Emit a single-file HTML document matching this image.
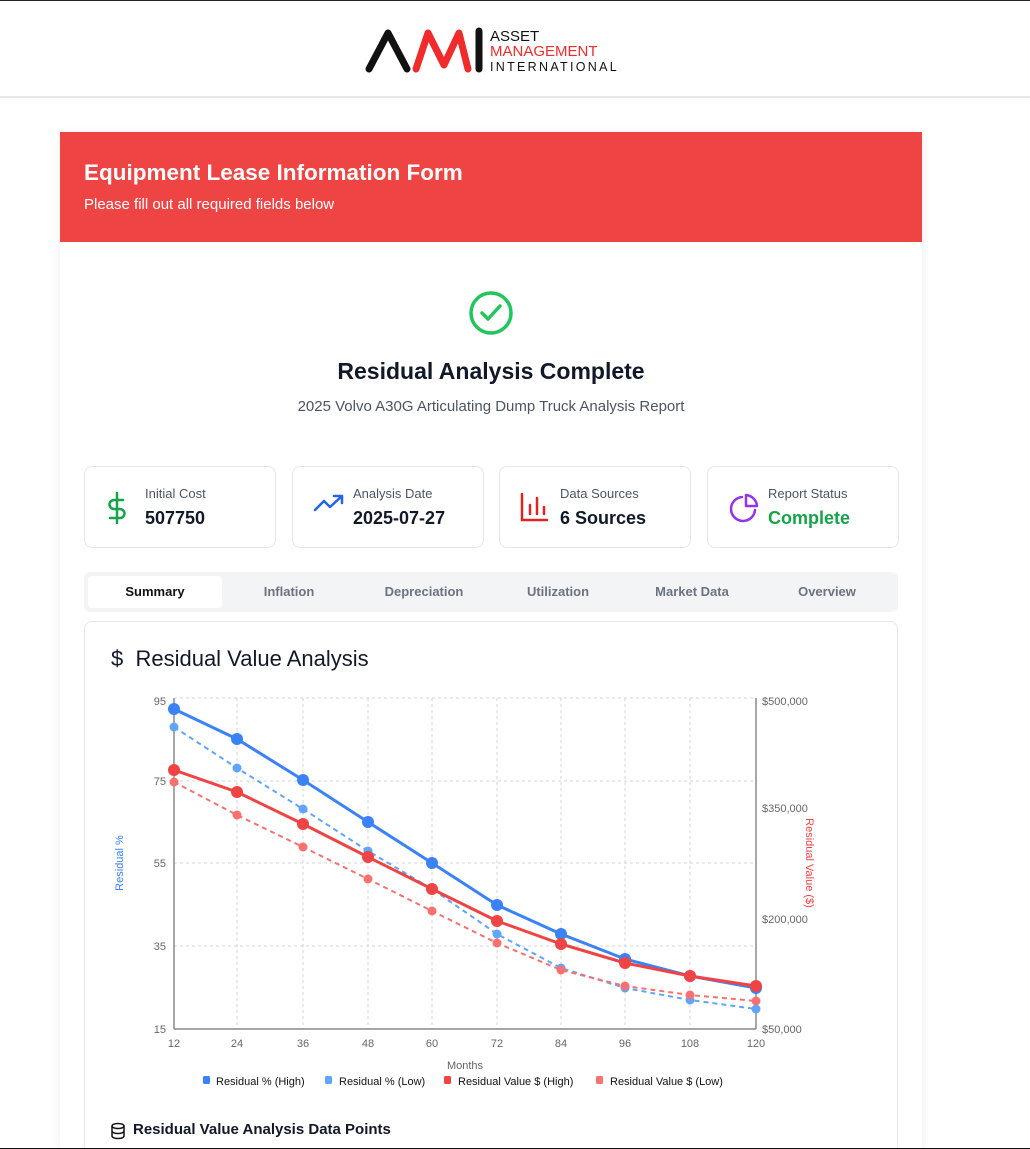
<!DOCTYPE html>
<html><head><meta charset="utf-8"><style>
*{box-sizing:border-box;margin:0;padding:0}
html{width:1030px;height:1149px;overflow:hidden}
body{width:1030px;height:1149px;overflow:hidden;background:#fff;font-family:"Liberation Sans",sans-serif;color:#111827;position:relative;border-top:1px solid #222}
.hdr{height:97px;border-bottom:2px solid #e5e7eb;position:relative}
.card{position:absolute;left:60px;top:131px;width:862px;height:1016px;background:#fff;box-shadow:0 2px 10px rgba(0,0,0,.08);overflow:hidden}
.red{height:110px;background:#ef4444;color:#fff;padding:28px 24px}
.red h1{font-size:22.5px;font-weight:bold;margin-bottom:10px}
.red p{font-size:15px}
.stat{position:absolute;top:334px;width:192px;height:82px;border:1px solid #e5e7eb;border-radius:8px;background:#fff}
.stat .l{position:absolute;left:60px;top:19px;font-size:13px;color:#4b5563}
.stat .v{position:absolute;left:60px;top:41px;font-size:18px;font-weight:bold}
.stat svg{position:absolute;left:20px;top:25px}
.tabs{position:absolute;left:24px;top:440px;width:814px;height:40px;background:#f3f4f6;border-radius:6px}
.tab{position:absolute;top:12px;font-size:13px;font-weight:bold;color:#6b7280;width:134px;text-align:center}
.act{position:absolute;left:4px;top:4px;width:134px;height:32px;background:#fff;border-radius:4px}
.cc{position:absolute;left:24px;top:489px;width:814px;height:540px;border:1px solid #e5e7eb;border-radius:8px}
.bot{position:absolute;left:0;top:1147px;width:1030px;height:2px;background:#111}
</style></head><body>
<div class="hdr">
<svg style="position:absolute;left:364px;top:24px" width="260" height="50">
<path d="M5 44 L24 8 L43 44" stroke="#111" stroke-width="7" fill="none" stroke-linecap="round" stroke-linejoin="round"/>
<path d="M52 44 L64 8 L80 40 L95 8 L104 44" stroke="#ef2b2b" stroke-width="7" fill="none" stroke-linecap="round" stroke-linejoin="round"/>
<path d="M115 6 L115 44" stroke="#111" stroke-width="7" stroke-linecap="round"/>
<text x="126" y="16" font-size="15" font-family="Liberation Sans" fill="#111">ASSET</text>
<text x="126" y="31" font-size="15" font-family="Liberation Sans" fill="#ef2b2b">MANAGEMENT</text>
<text x="126" y="46" font-size="12.5" font-family="Liberation Sans" fill="#111" letter-spacing="2.3">INTERNATIONAL</text>
</svg>
</div>
<div class="card">
<div class="red"><h1>Equipment Lease Information Form</h1><p>Please fill out all required fields below</p></div>
<svg style="position:absolute;left:408px;top:158px" width="46" height="46" viewBox="0 0 46 46"><circle cx="23" cy="23" r="20" stroke="#22c55e" stroke-width="3.5" fill="none"/><path d="M14 23 L20 29 L32 16" stroke="#22c55e" stroke-width="3.5" fill="none" stroke-linecap="round" stroke-linejoin="round"/></svg>
<div style="position:absolute;left:0;width:862px;top:226px;text-align:center;font-size:23px;font-weight:bold">Residual Analysis Complete</div>
<div style="position:absolute;left:0;width:862px;top:266px;text-align:center;font-size:15px;color:#4b5563">2025 Volvo A30G Articulating Dump Truck Analysis Report</div>
<div class="stat" style="left:24px"><svg width="24" height="32" viewBox="0 0 24 32"><path d="M12 1V31M18 8H9a4.5 4.5 0 0 0 0 9h6a4.5 4.5 0 0 1 0 9H5" stroke="#16a34a" stroke-width="2.5" fill="none" stroke-linecap="round"/></svg><div class="l">Initial Cost</div><div class="v">507750</div></div>
<div class="stat" style="left:232px"><svg width="32" height="24" viewBox="0 0 32 24"><path d="M2 18L11 9l6 6L29 4M21 4h8v7" stroke="#2563eb" stroke-width="2.5" fill="none" stroke-linecap="round" stroke-linejoin="round"/></svg><div class="l">Analysis Date</div><div class="v">2025-07-27</div></div>
<div class="stat" style="left:439px"><svg width="30" height="32" viewBox="0 0 30 32"><path d="M2 2V28H27M10 22V13M17 22V6M24 22V15" stroke="#dc2626" stroke-width="2.5" fill="none" stroke-linecap="round"/></svg><div class="l">Data Sources</div><div class="v">6 Sources</div></div>
<div class="stat" style="left:647px"><svg width="32" height="32" viewBox="0 0 32 32"><path d="M27 18A12 12 0 1 1 14 5" stroke="#9333ea" stroke-width="2.5" fill="none" stroke-linecap="round"/><path d="M18 3A12 12 0 0 1 29 14H18Z" stroke="#9333ea" stroke-width="2.5" fill="none" stroke-linejoin="round"/></svg><div class="l">Report Status</div><div class="v" style="color:#16a34a">Complete</div></div>
<div class="tabs"><div class="act"></div>
<div class="tab" style="left:4px;color:#111">Summary</div><div class="tab" style="left:138px">Inflation</div><div class="tab" style="left:273px">Depreciation</div><div class="tab" style="left:407px">Utilization</div><div class="tab" style="left:541px">Market Data</div><div class="tab" style="left:676px">Overview</div></div>
<div class="cc">
<div style="position:absolute;left:26px;top:24px;font-size:22px">$&nbsp; Residual Value Analysis</div>
<svg style="position:absolute;left:24px;top:500px" width="18" height="18" viewBox="0 0 18 18"><ellipse cx="9" cy="4" rx="6" ry="2.5" stroke="#111" stroke-width="1.5" fill="none"/><path d="M3 4v10c0 1.4 2.7 2.5 6 2.5s6-1.1 6-2.5V4M3 9c0 1.4 2.7 2.5 6 2.5s6-1.1 6-2.5" stroke="#111" stroke-width="1.5" fill="none"/></svg>
<div style="position:absolute;left:48px;top:499px;font-size:15px;font-weight:bold">Residual Value Analysis Data Points</div>
</div>
</div>
<svg style="position:absolute;left:0;top:0" width="1030" height="1149" font-family="Liberation Sans" font-size="11">
<g stroke="#d1d5db" stroke-dasharray="3,3" stroke-width="1">
<line x1="174" y1="697" x2="756" y2="697"/><line x1="174" y1="780" x2="756" y2="780"/><line x1="174" y1="862" x2="756" y2="862"/><line x1="174" y1="945" x2="756" y2="945"/>
<line x1="237" y1="697" x2="237" y2="1028"/><line x1="303" y1="697" x2="303" y2="1028"/><line x1="368" y1="697" x2="368" y2="1028"/><line x1="432" y1="697" x2="432" y2="1028"/><line x1="497" y1="697" x2="497" y2="1028"/><line x1="561" y1="697" x2="561" y2="1028"/><line x1="625" y1="697" x2="625" y2="1028"/><line x1="690" y1="697" x2="690" y2="1028"/>
</g>
<g stroke="#888" stroke-width="1.5"><line x1="174" y1="697" x2="174" y2="1028"/><line x1="756" y1="697" x2="756" y2="1028"/><line x1="174" y1="1028" x2="756" y2="1028"/></g>
<g fill="#666" text-anchor="end"><text x="166" y="704">95</text><text x="166" y="784">75</text><text x="166" y="866">55</text><text x="166" y="949">35</text><text x="166" y="1032">15</text></g>
<g fill="#666"><text x="762" y="704">$500,000</text><text x="762" y="811">$350,000</text><text x="762" y="922">$200,000</text><text x="762" y="1032">$50,000</text></g>
<g fill="#666" text-anchor="middle"><text x="174" y="1046">12</text><text x="237" y="1046">24</text><text x="303" y="1046">36</text><text x="368" y="1046">48</text><text x="432" y="1046">60</text><text x="497" y="1046">72</text><text x="561" y="1046">84</text><text x="625" y="1046">96</text><text x="690" y="1046">108</text><text x="756" y="1046">120</text><text x="465" y="1068">Months</text></g>
<text transform="translate(123,862) rotate(-90)" fill="#3b82f6" text-anchor="middle">Residual %</text>
<text transform="translate(806,862) rotate(90)" fill="#ef4444" text-anchor="middle">Residual Value ($)</text>
<g fill="none" stroke-linejoin="round">
<polyline stroke="#60a5fa" stroke-width="2" stroke-dasharray="5,4" points="174,726 237,767 303,808 368,850 432,888 497,933 561,967 625,987 690,999 756,1008"/>
<polyline stroke="#f87171" stroke-width="2" stroke-dasharray="5,4" points="174,781 237,814 303,846 368,878 432,910 497,942 561,969 625,985 690,994 756,1000"/>
<polyline stroke="#3b82f6" stroke-width="3" points="174,708 237,738 303,779 368,821 432,862 497,904 561,933 625,958 690,975 756,987"/>
<polyline stroke="#ef4444" stroke-width="3" points="174,769 237,791 303,823 368,856 432,888 497,920 561,943 625,962 690,975 756,985"/>
</g>
<g fill="#60a5fa"><circle cx="174" cy="726" r="4.5"/><circle cx="237" cy="767" r="4.5"/><circle cx="303" cy="808" r="4.5"/><circle cx="368" cy="850" r="4.5"/><circle cx="432" cy="888" r="4.5"/><circle cx="497" cy="933" r="4.5"/><circle cx="561" cy="967" r="4.5"/><circle cx="625" cy="987" r="4.5"/><circle cx="690" cy="999" r="4.5"/><circle cx="756" cy="1008" r="4.5"/></g>
<g fill="#f87171"><circle cx="174" cy="781" r="4.5"/><circle cx="237" cy="814" r="4.5"/><circle cx="303" cy="846" r="4.5"/><circle cx="368" cy="878" r="4.5"/><circle cx="432" cy="910" r="4.5"/><circle cx="497" cy="942" r="4.5"/><circle cx="561" cy="969" r="4.5"/><circle cx="625" cy="985" r="4.5"/><circle cx="690" cy="994" r="4.5"/><circle cx="756" cy="1000" r="4.5"/></g>
<g fill="#3b82f6"><circle cx="174" cy="708" r="6"/><circle cx="237" cy="738" r="6"/><circle cx="303" cy="779" r="6"/><circle cx="368" cy="821" r="6"/><circle cx="432" cy="862" r="6"/><circle cx="497" cy="904" r="6"/><circle cx="561" cy="933" r="6"/><circle cx="625" cy="958" r="6"/><circle cx="690" cy="975" r="6"/><circle cx="756" cy="987" r="6"/></g>
<g fill="#ef4444"><circle cx="174" cy="769" r="6"/><circle cx="237" cy="791" r="6"/><circle cx="303" cy="823" r="6"/><circle cx="368" cy="856" r="6"/><circle cx="432" cy="888" r="6"/><circle cx="497" cy="920" r="6"/><circle cx="561" cy="943" r="6"/><circle cx="625" cy="962" r="6"/><circle cx="690" cy="975" r="6"/><circle cx="756" cy="985" r="6"/></g>
<g fill="#111"><rect x="203" y="1075" width="7" height="8" rx="1.5" fill="#3b82f6"/><text x="216" y="1084">Residual % (High)</text>
<rect x="325" y="1075" width="7" height="8" rx="1.5" fill="#60a5fa"/><text x="339" y="1084">Residual % (Low)</text>
<rect x="444" y="1075" width="7" height="8" rx="1.5" fill="#ef4444"/><text x="458" y="1084">Residual Value $ (High)</text>
<rect x="596" y="1075" width="7" height="8" rx="1.5" fill="#f87171"/><text x="610" y="1084">Residual Value $ (Low)</text></g>
</svg>
<div class="bot"></div>
</body></html>
